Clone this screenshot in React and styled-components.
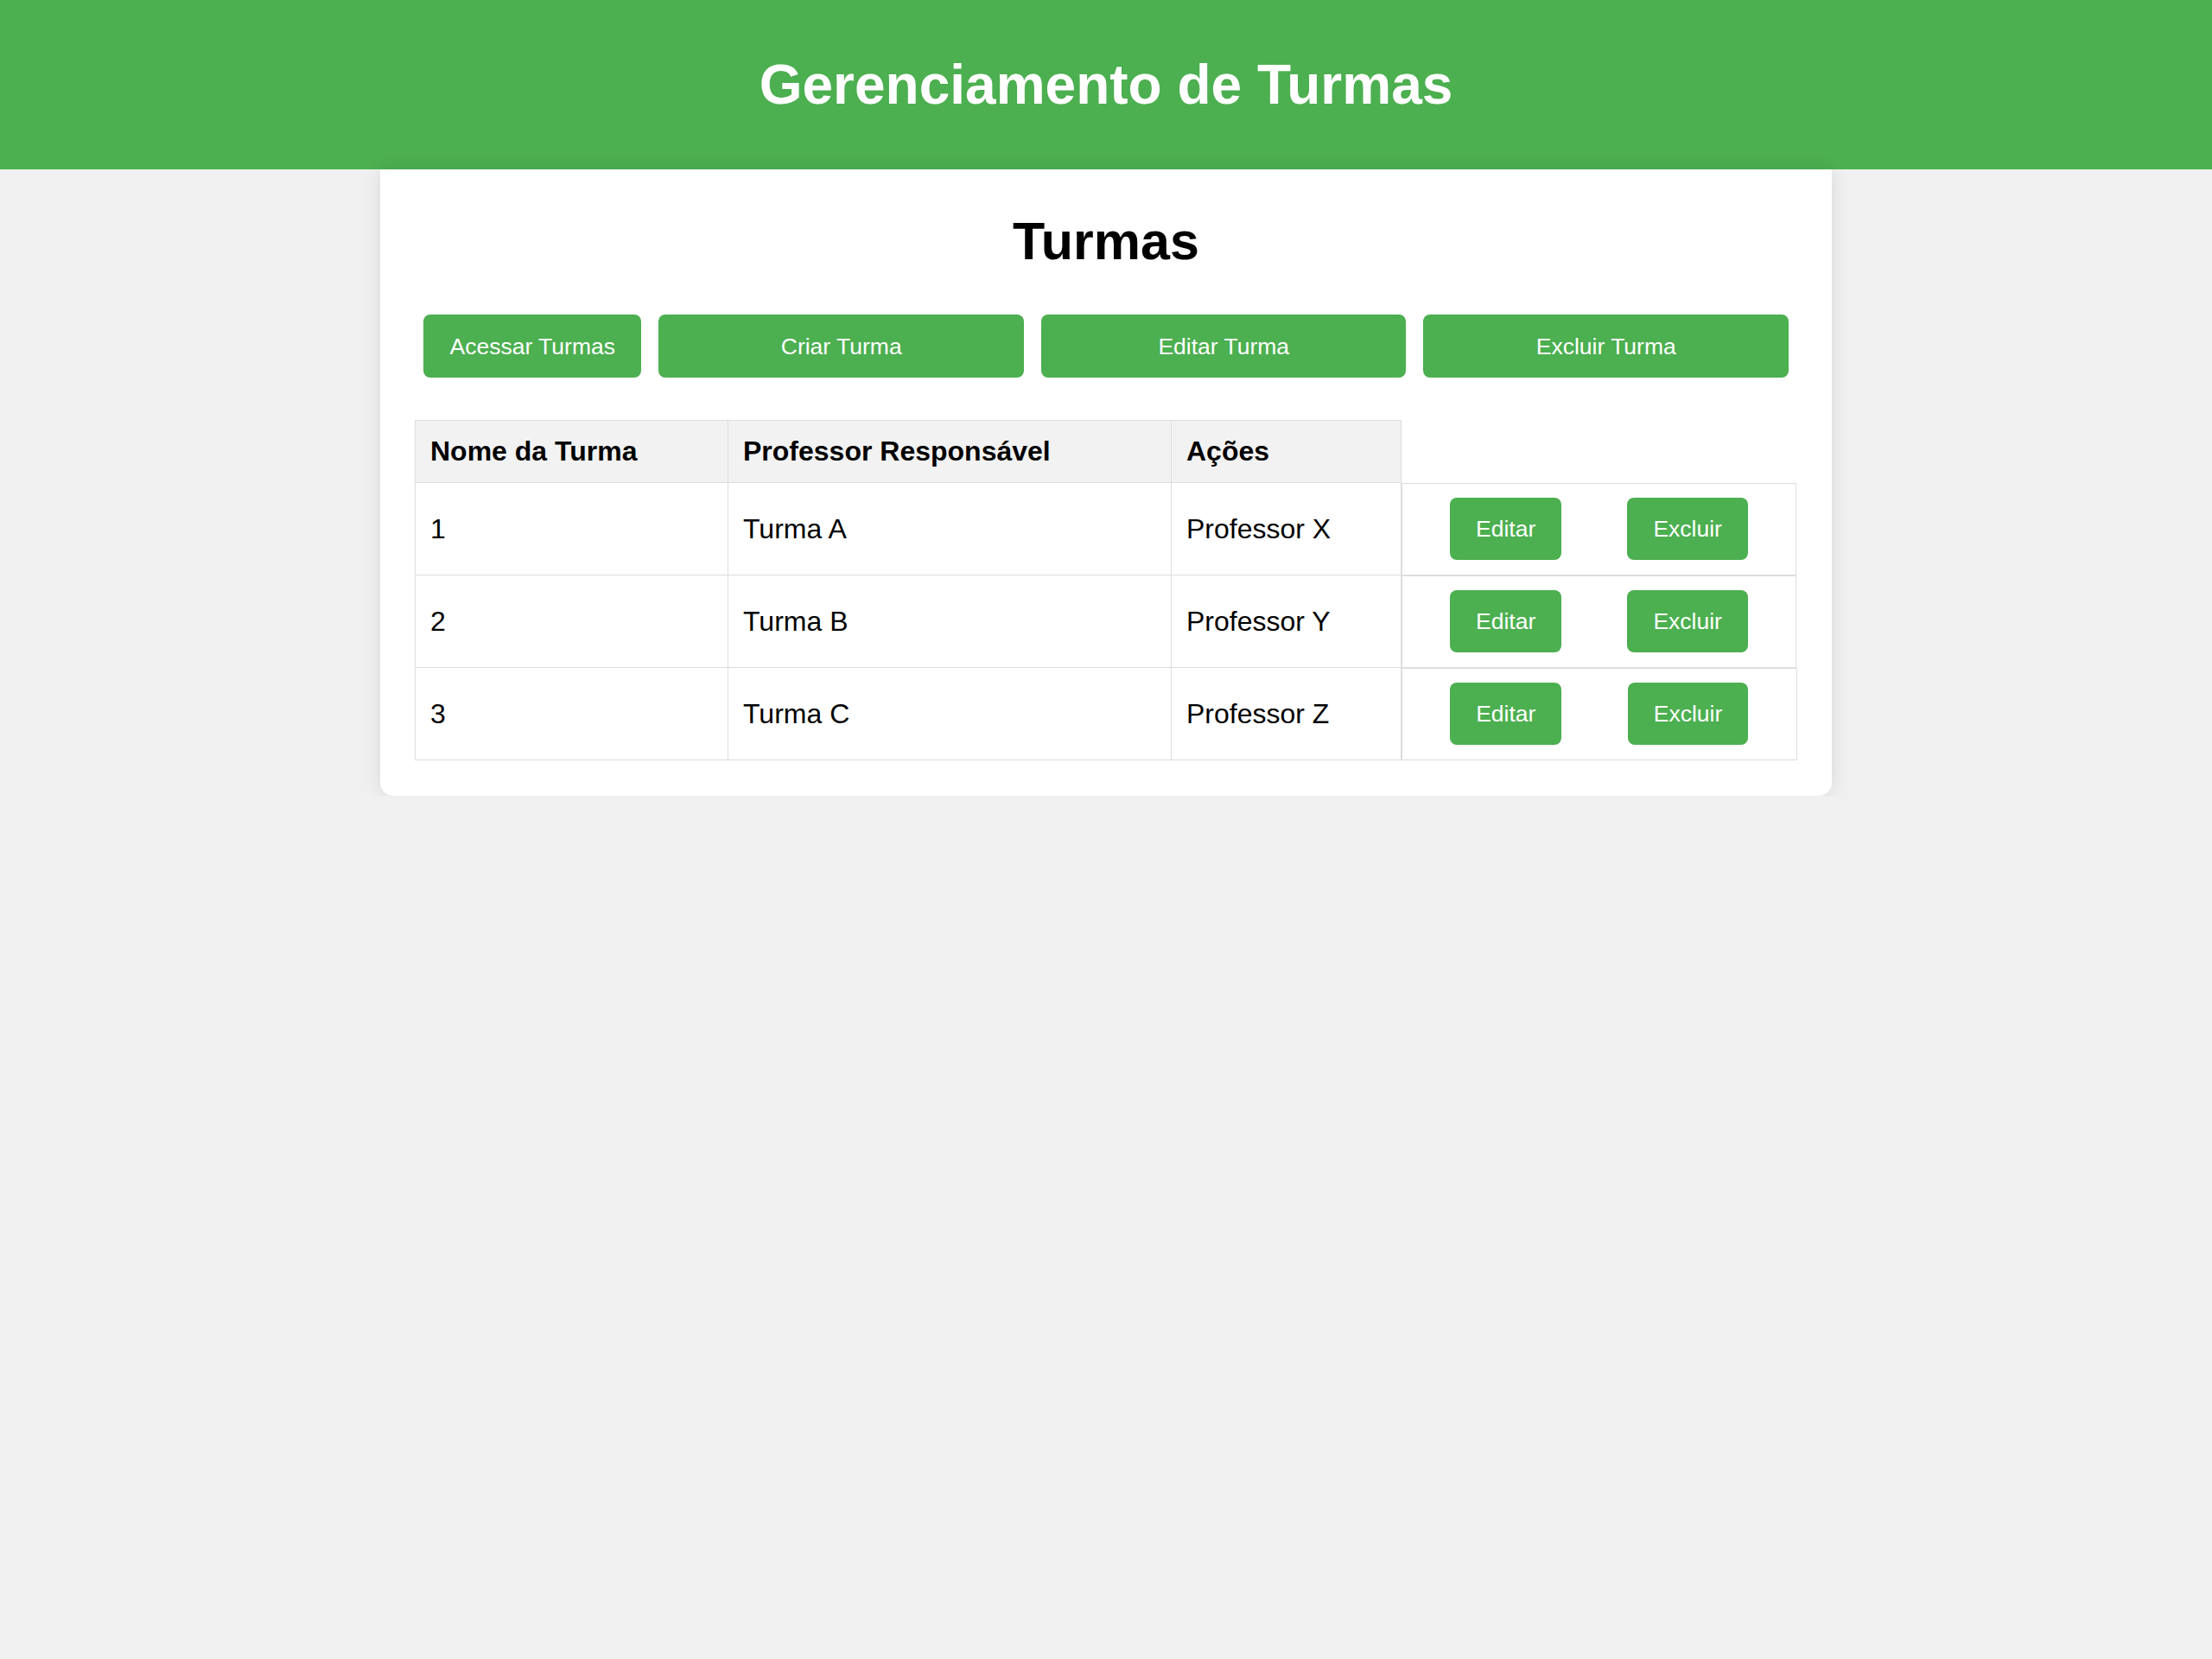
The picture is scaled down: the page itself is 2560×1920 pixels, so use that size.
import React from "react";
import styled, { createGlobalStyle } from "styled-components";

const GlobalStyle = createGlobalStyle`
  html, body {
    margin: 0;
    padding: 0;
    background: #f0f0f0;
    font-family: "Liberation Sans", Arial, sans-serif;
  }
`;

const Header = styled.header`
  background: #4caf50;
  color: #fff;
  height: 196px;
  display: flex;
  align-items: center;
  justify-content: center;
`;

const Title = styled.h1`
  margin: 0;
  font-size: 64px;
  font-weight: bold;
`;

const Card = styled.main`
  width: 1680px;
  box-sizing: border-box;
  margin: 0 auto;
  background: #fff;
  padding: 40px 40px 41px;
  border-radius: 0 0 15px 15px;
  box-shadow: 0 0 20px rgba(0, 0, 0, 0.1);
`;

const Subtitle = styled.h2`
  margin: 8px 0 40px;
  text-align: center;
  font-size: 61px;
  font-weight: bold;
  color: #000;
`;

const Toolbar = styled.div`
  display: flex;
  margin-bottom: 39px;
`;

const Button = styled.button`
  background: #4caf50;
  color: #fff;
  border: none;
  border-radius: 8px;
  font-family: "Liberation Sans", Arial, sans-serif;
  font-size: 26.5px;
  line-height: 30px;
  padding: 21px 30px;
  cursor: pointer;
  white-space: nowrap;
`;

const ToolbarButton = styled(Button)`
  margin: 10px;
  padding: 21.5px 30.5px;
  flex: ${(p) => (p.$grow ? "1 1 0" : "0 0 auto")};
`;

const Table = styled.table`
  width: 100%;
  border-collapse: collapse;
  table-layout: fixed;
  font-size: 32px;
  color: #000;
`;

const HeadCell = styled.th`
  background: #f2f2f2;
  border: 1px solid #ddd;
  padding: 17px;
  text-align: left;
  font-weight: bold;
`;

const Cell = styled.td`
  border: 1px solid #ddd;
  padding: 17px;
  text-align: left;
`;

const ActionsCell = styled.td`
  border: 1px solid #ddd;
  padding: 16.5px 17px;
  display: flex;
  justify-content: space-around;
  align-items: center;
`;

const turmas = [
  { id: 1, nome: "Turma A", professor: "Professor X" },
  { id: 2, nome: "Turma B", professor: "Professor Y" },
  { id: 3, nome: "Turma C", professor: "Professor Z" },
];

export default function App() {
  return (
    <>
      <GlobalStyle />
      <Header>
        <Title>Gerenciamento de Turmas</Title>
      </Header>
      <Card>
        <Subtitle>Turmas</Subtitle>
        <Toolbar>
          <ToolbarButton>Acessar Turmas</ToolbarButton>
          <ToolbarButton $grow>Criar Turma</ToolbarButton>
          <ToolbarButton $grow>Editar Turma</ToolbarButton>
          <ToolbarButton $grow>Excluir Turma</ToolbarButton>
        </Toolbar>
        <Table>
          <colgroup>
            <col style={{ width: 362 }} />
            <col style={{ width: 513 }} />
            <col style={{ width: 266 }} />
            <col />
          </colgroup>
          <thead>
            <tr>
              <HeadCell>Nome da Turma</HeadCell>
              <HeadCell>Professor Responsável</HeadCell>
              <HeadCell>Ações</HeadCell>
            </tr>
          </thead>
          <tbody>
            {turmas.map((t) => (
              <tr key={t.id}>
                <Cell>{t.id}</Cell>
                <Cell>{t.nome}</Cell>
                <Cell>{t.professor}</Cell>
                <ActionsCell>
                  <Button>Editar</Button>
                  <Button>Excluir</Button>
                </ActionsCell>
              </tr>
            ))}
          </tbody>
        </Table>
      </Card>
    </>
  );
}
